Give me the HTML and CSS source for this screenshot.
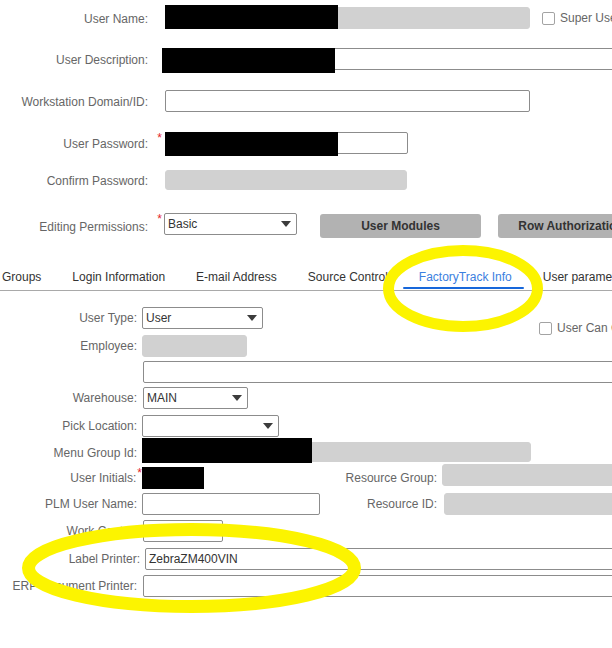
FILE: index.html
```html
<!DOCTYPE html>
<html lang="en">
<head>
<meta charset="utf-8">
<title>User</title>
<link rel="stylesheet" href="styles.css">
</head>
<body>
<div class="page">
  <section class="top">
    <div class="row r1">
      <span class="lbl">User Name:</span><span class="req"></span>
      <div class="fld gray w365"><span class="redact rd-top"></span></div>
      <label class="chk chk-super"><span class="box"></span>Super User</label>
    </div>
    <div class="row r2">
      <span class="lbl">User Description:</span><span class="req"></span>
      <div class="fld desc"><span class="redact rd-desc"></span></div>
    </div>
    <div class="row r3">
      <span class="lbl">Workstation Domain/ID:</span><span class="req"></span>
      <div class="fld w365"></div>
    </div>
    <div class="row r4">
      <span class="lbl">User Password:</span><span class="req"><span class="ast">*</span></span>
      <div class="fld w243"><span class="redact rd-pw"></span></div>
    </div>
    <div class="row r5">
      <span class="lbl">Confirm Password:</span><span class="req"></span>
      <div class="fld gray w242 h20"></div>
    </div>
    <div class="row r6">
      <span class="lbl lbl-low">Editing Permissions:</span><span class="req"><span class="ast">*</span></span>
      <div class="fld sel w133 nudge">Basic<svg class="arr" width="10" height="6" viewBox="0 0 10 6"><path d="M0 0H10L5 6Z"/></svg></div>
      <div class="btn btn-mod">User Modules</div>
      <div class="btn btn-row">Row Authorization</div>
    </div>
  </section>

  <nav class="tabs">
    <span class="tab">Groups</span>
    <span class="tab">Login Information</span>
    <span class="tab">E-mail Address</span>
    <span class="tab">Source Control</span>
    <span class="tab active">FactoryTrack Info</span>
    <span class="tab">User parameters</span>
  </nav>

  <section class="lower">
    <span class="l2">User Type:</span>
    <div class="fld sel f2 w121">User<svg class="arr" width="10" height="6" viewBox="0 0 10 6"><path d="M0 0H10L5 6Z"/></svg></div>
    <label class="chk chk-can"><span class="box"></span>User Can Change Password</label>

    <span class="l2">Employee:</span>
    <div class="fld gray f2 w105"></div>

    <span class="l2"></span>
    <div class="fld wide w520 x1"></div>

    <span class="l2">Warehouse:</span>
    <div class="fld sel f2 w105 x1">MAIN<svg class="arr" width="10" height="6" viewBox="0 0 10 6"><path d="M0 0H10L5 6Z"/></svg></div>

    <span class="l2">Pick Location:</span>
    <div class="fld sel f2 w137"><svg class="arr" width="10" height="6" viewBox="0 0 10 6"><path d="M0 0H10L5 6Z"/></svg></div>

    <span class="l2">Menu Group Id:</span>
    <div class="fld gray wide w389 h20"><span class="redact rd-menu"></span></div>

    <span class="l2">User Initials:<span class="ast ast-in">*</span></span>
    <div class="fld f2 w40"><span class="redact rd-init"></span></div>
    <span class="l3">Resource Group:</span>
    <div class="fld gray f4 wr up3"></div>

    <span class="l2">PLM User Name:</span>
    <div class="fld f2 w178"></div>
    <span class="l3">Resource ID:</span>
    <div class="fld gray f4 wr x2"></div>

    <span class="l2">Work Center:</span>
    <div class="fld f2 w80 x1"></div>

    <span class="l2 l2-in">Label Printer:</span>
    <div class="fld wide w520 x3">ZebraZM400VIN</div>

    <span class="l2">ERP Document Printer:</span>
    <div class="fld wide w520 x1"></div>
  </section>

  <svg class="marks" width="612" height="648" viewBox="0 0 612 648">
    <ellipse cx="463" cy="288.5" rx="74.5" ry="38" fill="none" stroke="#fcf400" stroke-width="11"/>
    <ellipse cx="191.5" cy="568" rx="163" ry="38.5" fill="none" stroke="#fcf400" stroke-width="13"/>
  </svg>
</div>
</body>
</html>
```

FILE: styles.css
```css
html, body {
  margin: 0;
  padding: 0;
  overflow: hidden;
  background: #fff;
}
body {
  font-family: "Liberation Sans", Arial, sans-serif;
  font-size: 12px;
  color: #333;
}
.page {
  position: relative;
  width: 612px;
  height: 648px;
  overflow: hidden;
}

/* ---------- top form ---------- */
.top {
  display: flex;
  flex-direction: column;
  padding-top: 7px;
}
.row {
  display: flex;
  align-items: center;
  height: 22px;
  white-space: nowrap;
}
.r2 { margin-top: 19px; }
.r3 { margin-top: 20px; }
.r4 { margin-top: 20px; }
.r5 { margin-top: 16px; height: 20px; }
.r6 { margin-top: 23px; height: 25px; align-items: flex-start; }

.lbl {
  width: 148px;
  flex: none;
  text-align: right;
  color: #666;
  padding-top: 2px;
}
.lbl-low { padding-top: 7px; }
.req {
  width: 17px;
  flex: none;
  align-self: stretch;
  display: flex;
  justify-content: flex-end;
  align-items: flex-start;
  padding-right: 3px;
  box-sizing: border-box;
}
.ast {
  color: #e3262c;
  font-size: 12px;
  line-height: 10px;
  margin-top: 1px;
}
.ast-in {
  position: relative;
  top: -5px;
  margin-right: -5px;
  margin-left: 1px;
}

/* ---------- fields ---------- */
.fld {
  position: relative;
  flex: none;
  box-sizing: border-box;
  height: 22px;
  border: 1px solid #8c8c8c;
  border-radius: 2px;
  background: #fff;
  display: flex;
  align-items: center;
  padding-left: 3px;
  color: #333;
  white-space: nowrap;
}
.fld.gray {
  background: #d1d1d1;
  border-color: #d1d1d1;
  border-radius: 3px;
}
.h20 { height: 20px; }
.w365 { width: 365px; }
.w243 { width: 243px; }
.w242 { width: 242px; }
.w133 { width: 133px; }
.w121 { width: 121px; }
.w105 { width: 105px; }
.w137 { width: 137px; }
.w389 { width: 389px; }
.w520 { width: 520px; }
.w40 { width: 40px; }
.w178 { width: 178px; }
.w80 { width: 80px; }
.wr { width: 200px; }
.desc {
  width: 480px;
  margin-left: -2px;
  border-left: none;
  border-right: none;
  border-radius: 0;
}
.nudge { margin-left: -1px; }
.sel .arr {
  margin-left: auto;
  margin-right: 5px;
  fill: #3c3c3c;
}
.redact {
  position: absolute;
  left: -1px;
  background: #000;
}
.rd-top { top: -3px; width: 173px; height: 24px; }
.rd-desc { top: -1px; width: 173px; height: 25px; }
.rd-pw { top: -1px; width: 173px; height: 24px; }
.rd-menu { top: -5px; width: 170px; height: 25px; }
.rd-init { top: -1px; width: 62px; height: 22px; }

.btn {
  flex: none;
  height: 24px;
  width: 161px;
  background: #b2b2b2;
  border-radius: 3px;
  font-weight: bold;
  color: #333;
  display: flex;
  align-items: center;
  justify-content: center;
  margin-top: 1px;
}
.btn-mod { margin-left: 23px; }
.btn-row { margin-left: 17px; width: 146px; }

.chk {
  display: flex;
  align-items: center;
  gap: 5px;
  color: #666;
  white-space: nowrap;
}
.box {
  width: 13px;
  height: 13px;
  box-sizing: border-box;
  border: 1px solid #a3a3a3;
  border-radius: 2px;
  background: #fff;
  flex: none;
}
.chk-super { margin-left: 12px; }

/* ---------- tabs ---------- */
.tabs {
  display: flex;
  margin-top: 26px;
  margin-left: -13.5px;
  border-bottom: 1px solid #a9a9a9;
  white-space: nowrap;
}
.tab {
  position: relative;
  flex: none;
  padding: 6px 15.5px;
  line-height: 14px;
  color: #333;
}
.tab.active { color: #3b80e0; }
.tab.active::after {
  content: "";
  position: absolute;
  left: 0;
  right: 3px;
  bottom: 1px;
  height: 2px;
  border-radius: 1px;
  background: #1767da;
}

/* ---------- lower form ---------- */
.lower {
  display: grid;
  grid-template-columns: 137px 180px 110px 1fr;
  grid-template-rows: 28px 26px 26px 28px 27px 25px 26px 27px 28px 27px 22px;
  column-gap: 5px;
  align-items: start;
  margin-top: 16px;
}
.l2, .l3 {
  text-align: right;
  color: #666;
  line-height: 22px;
  white-space: nowrap;
}
.l2 { grid-column: 1; }
.l3 { grid-column: 3; }
.l2-in { margin-right: -3px; }
.f2 { grid-column: 2; justify-self: start; }
.f4 { grid-column: 4; justify-self: start; }
.wide { grid-column: 2 / -1; justify-self: start; }
.x1 { margin-left: 1px; }
.x2 { margin-left: 2px; }
.x3 { margin-left: 3px; }
.up3 { margin-top: -3px; }
.chk-can {
  grid-column: 4;
  align-self: end;
  margin-left: 97px;
}

/* annotation overlay */
.marks {
  position: absolute;
  left: 0;
  top: 0;
  pointer-events: none;
}
```
